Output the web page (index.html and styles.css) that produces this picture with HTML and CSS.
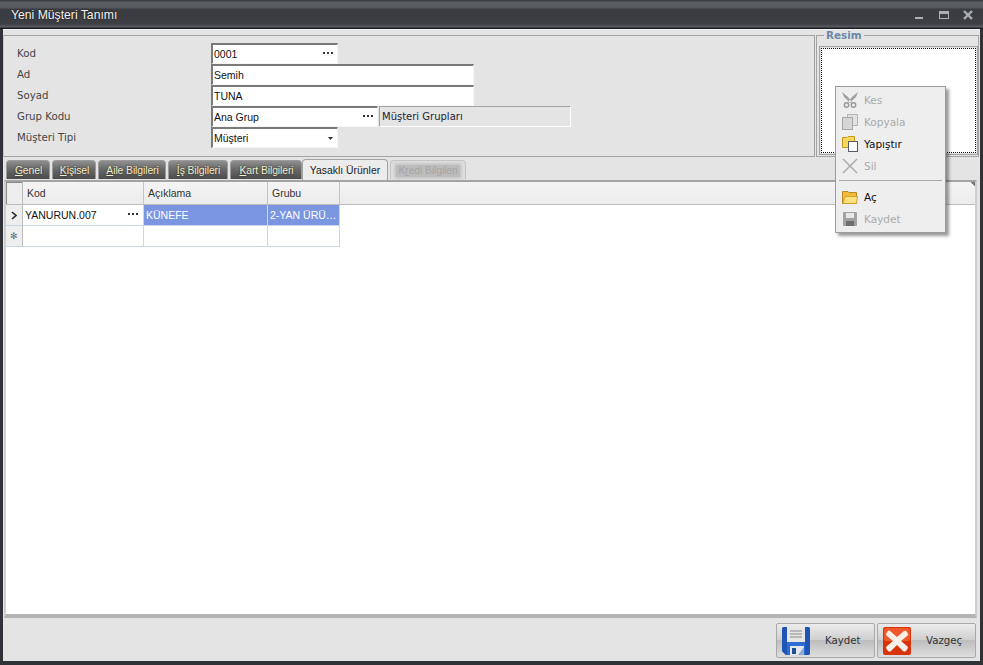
FILE: index.html
```html
<!DOCTYPE html>
<html lang="tr">
<head>
<meta charset="utf-8">
<title>Yeni Müşteri Tanımı</title>
<link rel="stylesheet" href="styles.css">
</head>
<body>
<div class="window">
  <header class="titlebar">
    <span class="title">Yeni Müşteri Tanımı</span>
    <div class="winbtns">
      <svg width="10" height="10" viewBox="0 0 10 10"><rect x="0" y="7" width="8" height="2" fill="#a9b0b8"/></svg>
      <svg width="10" height="10" viewBox="0 0 10 10"><path d="M0 1H10V9H0Z" fill="#a9b0b8"/><rect x="1" y="4" width="8" height="4" fill="#3d3f44"/></svg>
      <svg width="10" height="10" viewBox="0 0 10 10"><path d="M1 1 L9 9 M9 1 L1 9" stroke="#a9b0b8" stroke-width="2.4"/></svg>
    </div>
  </header>
  <div class="client">
    <section class="top">
      <div class="form">
        <div class="row"><label>Kod</label><div class="input w126"><span>0001</span><svg class="dots" width="10" height="2" viewBox="0 0 10 2"><path d="M0 0h2v2H0zM4 0h2v2H4zM8 0h2v2H8z" fill="#333"/></svg></div></div>
        <div class="row"><label>Ad</label><div class="input w262"><span>Semih</span></div></div>
        <div class="row"><label>Soyad</label><div class="input w262"><span>TUNA</span></div></div>
        <div class="row"><label>Grup Kodu</label><div class="input w165"><span>Ana Grup</span><svg class="dots" width="10" height="2" viewBox="0 0 10 2"><path d="M0 0h2v2H0zM4 0h2v2H4zM8 0h2v2H8z" fill="#333"/></svg></div><div class="readonly">Müşteri Grupları</div></div>
        <div class="row"><label>Müşteri Tipi</label><div class="input w126"><span>Müşteri</span><svg class="caret" width="5" height="3" viewBox="0 0 5 3"><path d="M0 0H5L2.5 3Z" fill="#333"/></svg></div></div>
      </div>
      <fieldset class="resim">
        <legend>Resim</legend>
        <div class="photo"></div>
      </fieldset>
    </section>
    <nav class="tabs">
      <span class="tab"><u>G</u>enel</span>
      <span class="tab"><u>K</u>işisel</span>
      <span class="tab"><u>A</u>ile Bilgileri</span>
      <span class="tab"><u>İ</u>ş Bilgileri</span>
      <span class="tab"><u>K</u>art Bilgileri</span>
      <span class="tab active">Yasaklı Ürünler</span>
      <span class="tab disabled"><span>K<u>r</u>edi Bilgileri</span></span>
    </nav>
    <section class="pane">
      <div class="grid">
        <div class="g-head">
          <div class="c ind corner"></div>
          <div class="c kod">Kod</div>
          <div class="c acik">Açıklama</div>
          <div class="c grp">Grubu</div>
          <div class="c fill"></div>
        </div>
        <div class="g-row">
          <div class="c ind"><svg width="7" height="9" viewBox="0 0 7 9"><path d="M1 1 L5 4.5 L1 8" fill="none" stroke="#222" stroke-width="1.6"/></svg></div>
          <div class="c kod cell"><span>YANURUN.007</span><svg class="dots" width="10" height="2" viewBox="0 0 10 2"><path d="M0 0h2v2H0zM4 0h2v2H4zM8 0h2v2H8z" fill="#333"/></svg></div>
          <div class="c acik cell sel">KÜNEFE</div>
          <div class="c grp cell sel">2-YAN ÜRÜ…</div>
        </div>
        <div class="g-row">
          <div class="c ind star">✻</div>
          <div class="c kod cell"></div>
          <div class="c acik cell"></div>
          <div class="c grp cell"></div>
        </div>
      </div>
    </section>
    <footer class="actions">
      <button class="btn">
        <svg width="28" height="28" viewBox="0 0 28 28">
          <path d="M0 2Q0 0 2 0H26Q28 0 28 2V26Q28 28 26 28H4L0 24Z" fill="#2f6cd2"/>
          <path d="M0 2Q0 0 2 0H5V28H4L0 24ZM23 0H26Q28 0 28 2V26Q28 28 26 28H23Z" fill="#1f55b4"/>
          <rect x="5" y="0" width="18" height="15" fill="#e6e6e2"/>
          <path d="M8 4H20M8 7H20M8 10H20" stroke="#a6aaae" stroke-width="1.4"/>
          <rect x="8" y="19" width="14" height="9" fill="#e3e7ee"/>
          <rect x="10" y="21" width="4" height="6" fill="#1d4f9c"/>
          <path d="M16 28L22 20V28Z" fill="#8fa8cf"/>
        </svg>
        <span>Kaydet</span>
      </button>
      <button class="btn">
        <svg width="28" height="28" viewBox="0 0 28 28">
          <rect width="28" height="28" rx="2" fill="#d8340c"/>
          <rect x="1" y="1" width="26" height="13" rx="2" fill="#f0582a"/>
          <path d="M7 4 L14 10 L21 4 Q23 3 24 5 L25 7 Q25 9 24 9 L18 14 L24 19 Q25 20 25 21 L23 24 Q22 25 20 24 L14 18 L8 24 Q6 25 5 24 L3 21 Q3 20 4 19 L10 14 L4 9 Q3 8 3 7 L5 4 Q6 3 7 4Z" fill="#f8efe9"/>
        </svg>
        <span>Vazgeç</span>
      </button>
    </footer>
  </div>
  <div class="menu">
    <div class="mi off">
      <svg width="16" height="16" viewBox="0 0 16 16"><path d="M0 0 L6 5 L10 10 L8.5 11 L2 5Z M16 0 L10 5 L6 10 L7.5 11 L14 5Z" fill="#a0a0a0"/><circle cx="4.5" cy="13" r="2.2" fill="none" stroke="#999" stroke-width="1.4"/><circle cx="11.5" cy="13" r="2.2" fill="none" stroke="#999" stroke-width="1.4"/></svg>
      <span>Kes</span>
    </div>
    <div class="mi off">
      <svg width="16" height="16" viewBox="0 0 16 16"><rect x="5.5" y="0.5" width="10" height="11" fill="#e2e2e2" stroke="#b4b4b4"/><rect x="0.5" y="3.5" width="10" height="12" fill="#d6d6d6" stroke="#a8a8a8"/></svg>
      <span>Kopyala</span>
    </div>
    <div class="mi">
      <svg width="16" height="16" viewBox="0 0 16 16"><path d="M0.5 1.5H5L6 0.5H12.5V11.5H0.5Z" fill="#f9d65c" stroke="#c79a1e"/><rect x="6.5" y="5.5" width="9" height="10" fill="#fff" stroke="#555a66"/></svg>
      <span>Yapıştır</span>
    </div>
    <div class="mi off">
      <svg width="16" height="16" viewBox="0 0 16 16"><path d="M1 1 L15 15 M15 1 L1 15" stroke="#a8a8a8" stroke-width="1.4"/></svg>
      <span>Sil</span>
    </div>
    <div class="sep"></div>
    <div class="mi">
      <svg width="16" height="14" viewBox="0 0 16 14"><path d="M0.5 1.5H6L7 2.5H14.5V13.5H0.5Z" fill="#f3b93a" stroke="#b98a1c"/><path d="M1 13.5 L3 6.5H15.5L14.5 13.5Z" fill="#fbe27c" stroke="#c79a1e" stroke-width="0.8"/></svg>
      <span>Aç</span>
    </div>
    <div class="mi off">
      <svg width="14" height="14" viewBox="0 0 14 14"><rect width="14" height="14" rx="1" fill="#a2a2a2"/><rect x="3" y="1" width="8" height="5" fill="#e8e8e8"/><rect x="3" y="9" width="8" height="5" fill="#6e6e6e"/></svg>
      <span>Kaydet</span>
    </div>
  </div>
</div>
</body>
</html>
```
FILE: styles.css
```css
* { box-sizing: border-box; }
html, body { margin: 0; padding: 0; }
body {
  width: 983px;
  height: 665px;
  overflow: hidden;
  font-family: "Liberation Sans", sans-serif;
  font-size: 10.5px;
  color: #1a1a1a;
}
.window {
  position: relative;
  width: 983px;
  height: 665px;
  display: flex;
  flex-direction: column;
  background: #2f3237;
}
.titlebar {
  height: 29px;
  flex: none;
  display: flex;
  align-items: center;
  justify-content: space-between;
  padding: 0 10px 0 11px;
  background: linear-gradient(#3a3c40 0, #3a3c40 1px, #5c6066 2px, #54575d 8px, #3a3c41 9px, #3d3f44 24px, #5b5e63 27px, #1c1e22 28px);
}
.title {
  color: #f2f2f2;
  font-size: 12.2px;
  text-shadow: 0 0 2px #111;
}
.winbtns { display: flex; gap: 14px; margin-top: 1px; }
.winbtns svg { display: block; }
.client {
  flex: 1;
  margin: 0 3px 4px;
  display: flex;
  flex-direction: column;
  background: #e4e4e4;
  min-height: 0;
}
.top {
  height: 128px;
  flex: none;
  display: flex;
  gap: 1px;
  padding-top: 5px;
  border-top: 1px solid #f2f2f2;
}
.form {
  width: 812px;
  height: 122px;
  border: 1px solid #a3a3a3;
  border-left-color: #c9c9c9;
  padding: 7px 0 0 13px;
  display: flex;
  flex-direction: column;
}
.row {
  display: flex;
  height: 21px;
  flex: none;
  align-items: center;
}
.row label {
  width: 194px;
  flex: none;
  color: #444;
  font-family: "DejaVu Sans", sans-serif;
  font-size: 10.2px;
  margin-top: -1px;
}
.input {
  height: 21px;
  display: flex;
  align-items: center;
  justify-content: space-between;
  background: #fff;
  border-top: 2px solid #7a7a7a;
  border-left: 2px solid #7a7a7a;
  border-right: 1px solid #f6f6f6;
  border-bottom: 1px solid #f6f6f6;
  padding: 0 4px 1px 1px;
  color: #111;
}
.w126 { width: 127px; }
.w262 { width: 263px; }
.w165 { width: 167px; }
.dots { display: block; flex: none; margin-top: -2px; }
.caret { margin-right: 0; margin-top: 2px; }
.readonly {
  width: 192px;
  height: 21px;
  margin-left: 1px;
  border-top: 1px solid #a3a3a3;
  border-left: 1px solid #a3a3a3;
  border-right: 1px solid #fff;
  border-bottom: 1px solid #fff;
  padding: 1px 2px 0;
  line-height: 17px;
  color: #223;
  font-family: "DejaVu Sans", sans-serif;
  font-size: 10px;
}
.resim {
  width: 163px;
  height: 127px;
  margin: -5px 0 0;
  padding: 0;
  border: 1px solid #a3a3a3;
  min-width: 0;
}
.resim legend {
  padding: 0 2px;
  margin-left: 7px;
  font-family: "DejaVu Sans", sans-serif;
  font-weight: bold;
  font-size: 10.4px;
  color: #6d87a6;
  line-height: 10px;
}
.photo {
  width: 155px;
  height: 105px;
  margin: 8px 0 0 4px;
  background: #fff;
  border: 1px dotted #111;
  outline: 1px solid #a3a3a3;
  outline-offset: 1px;
}
.tabs {
  height: 23px;
  flex: none;
  display: flex;
  align-items: flex-end;
  gap: 2px;
  padding: 0 0 1px 3px;
}
.tab {
  height: 19px;
  display: flex;
  align-items: center;
  justify-content: center;
  padding-left: 1px;
  border: 1px solid #9a9a9a;
  border-bottom: none;
  border-radius: 4px 4px 0 0;
  background: linear-gradient(#8e8e8e, #666 50%, #4c4c4c);
  color: #f2ecc8;
  font-size: 10.4px;
  letter-spacing: -0.1px;
  white-space: nowrap;
  text-shadow: 0 0 2px #222;
}
.tab u { text-underline-offset: 1px; }
.tab:nth-child(1) { width: 44px; }
.tab:nth-child(2) { width: 44px; }
.tab:nth-child(3) { width: 68px; }
.tab:nth-child(4) { width: 60px; }
.tab:nth-child(5) { width: 72px; }
.tab:nth-child(6) { width: 86px; margin-left: -1px; }
.tab:nth-child(7) { width: 76px; }
.tab.active {
  height: 21px;
  margin-bottom: -1px;
  padding-left: 0;
  background: #ececec;
  border-color: #a3a3a3;
  color: #222;
  text-shadow: none;
  letter-spacing: 0;
  transform: translateX(-1px);
}
.tab.disabled {
  background: #dedede;
  border-color: #c4c4c4;
  color: #a6a6a6;
  text-shadow: none;
  padding: 0;
  margin-left: -1px;
}
.tab.disabled span {
  display: block;
  line-height: 12px;
  background: #bcbcbc;
  box-shadow: 0 0 3px 1px #bcbcbc;
  padding: 0 2px;
  margin-top: 1px;
}
.pane {
  flex: 1;
  min-height: 0;
  margin: 0 3px 0 1px;
  background: #fff;
  border: 2px solid #cfcfcf;
  border-top-color: #a3a3a3;
  border-bottom: 4px solid #b4b4b4;
}
.grid { display: flex; flex-direction: column; }
.g-head {
  display: flex;
  height: 23px;
  background: linear-gradient(#f4f4f4, #ececec);
  border-bottom: 1px solid #bcbcbc;
}
.g-row { display: flex; height: 21px; }
.c {
  flex: none;
  display: flex;
  align-items: center;
  border-right: 1px solid #c4c4c4;
  overflow: hidden;
  white-space: nowrap;
}
.ind { width: 17px; justify-content: center; background: #eeeeee; border-bottom: 1px solid #c8d3e4; border-right-color: #bbb; }
.corner { border-bottom: none; box-shadow: inset 1px 1px #888; }
.star { color: #666; font-size: 9px; }
.kod { width: 121px; }
.acik { width: 124px; }
.grp { width: 72px; }
.fill {
  flex: 1;
  border-right: none;
  background: linear-gradient(225deg, #777 3px, transparent 3px);
}
.g-head .c:not(.ind):not(.fill) { padding-left: 4px; color: #333; }
.cell {
  border-right: 1px solid #ccd6e6;
  border-bottom: 1px solid #ccd6e6;
  padding: 0 5px 0 2px;
  justify-content: space-between;
  color: #111;
}
.sel { background: #7b96e0; color: #fff; justify-content: flex-start; }
.actions {
  height: 43px;
  flex: none;
  display: flex;
  justify-content: flex-end;
  align-items: flex-start;
  gap: 2px;
  padding: 5px 4px 0 0;
  background: #e4e4e4;
}
.btn {
  width: 99px;
  height: 35px;
  display: flex;
  align-items: center;
  padding: 0 4px 0 5px;
  gap: 15px;
  border: 1px solid #a9a9a9;
  border-radius: 2px;
  background: linear-gradient(#ececec, #cfcfcf 48%, #bdbdbd 50%, #dedede);
  font-family: "DejaVu Sans", sans-serif;
  font-size: 10.2px;
  color: #333;
}
.menu {
  position: absolute;
  left: 835px;
  top: 86px;
  width: 111px;
  height: 147px;
  padding: 2px 0;
  background: #eeeeee;
  border: 1px solid #9c9c9c;
  box-shadow: 3px 3px 3px rgba(0, 0, 0, 0.4);
}
.mi {
  height: 22px;
  display: flex;
  align-items: center;
  gap: 5px;
  padding-left: 5px;
  color: #111;
  font-family: "DejaVu Sans", sans-serif;
  font-size: 10.5px;
}
.mi svg { width: 18px; flex: none; }
.mi.off { color: #aaa; }
.sep { height: 1px; background: #aaa; margin: 3px 3px 5px; }
```
